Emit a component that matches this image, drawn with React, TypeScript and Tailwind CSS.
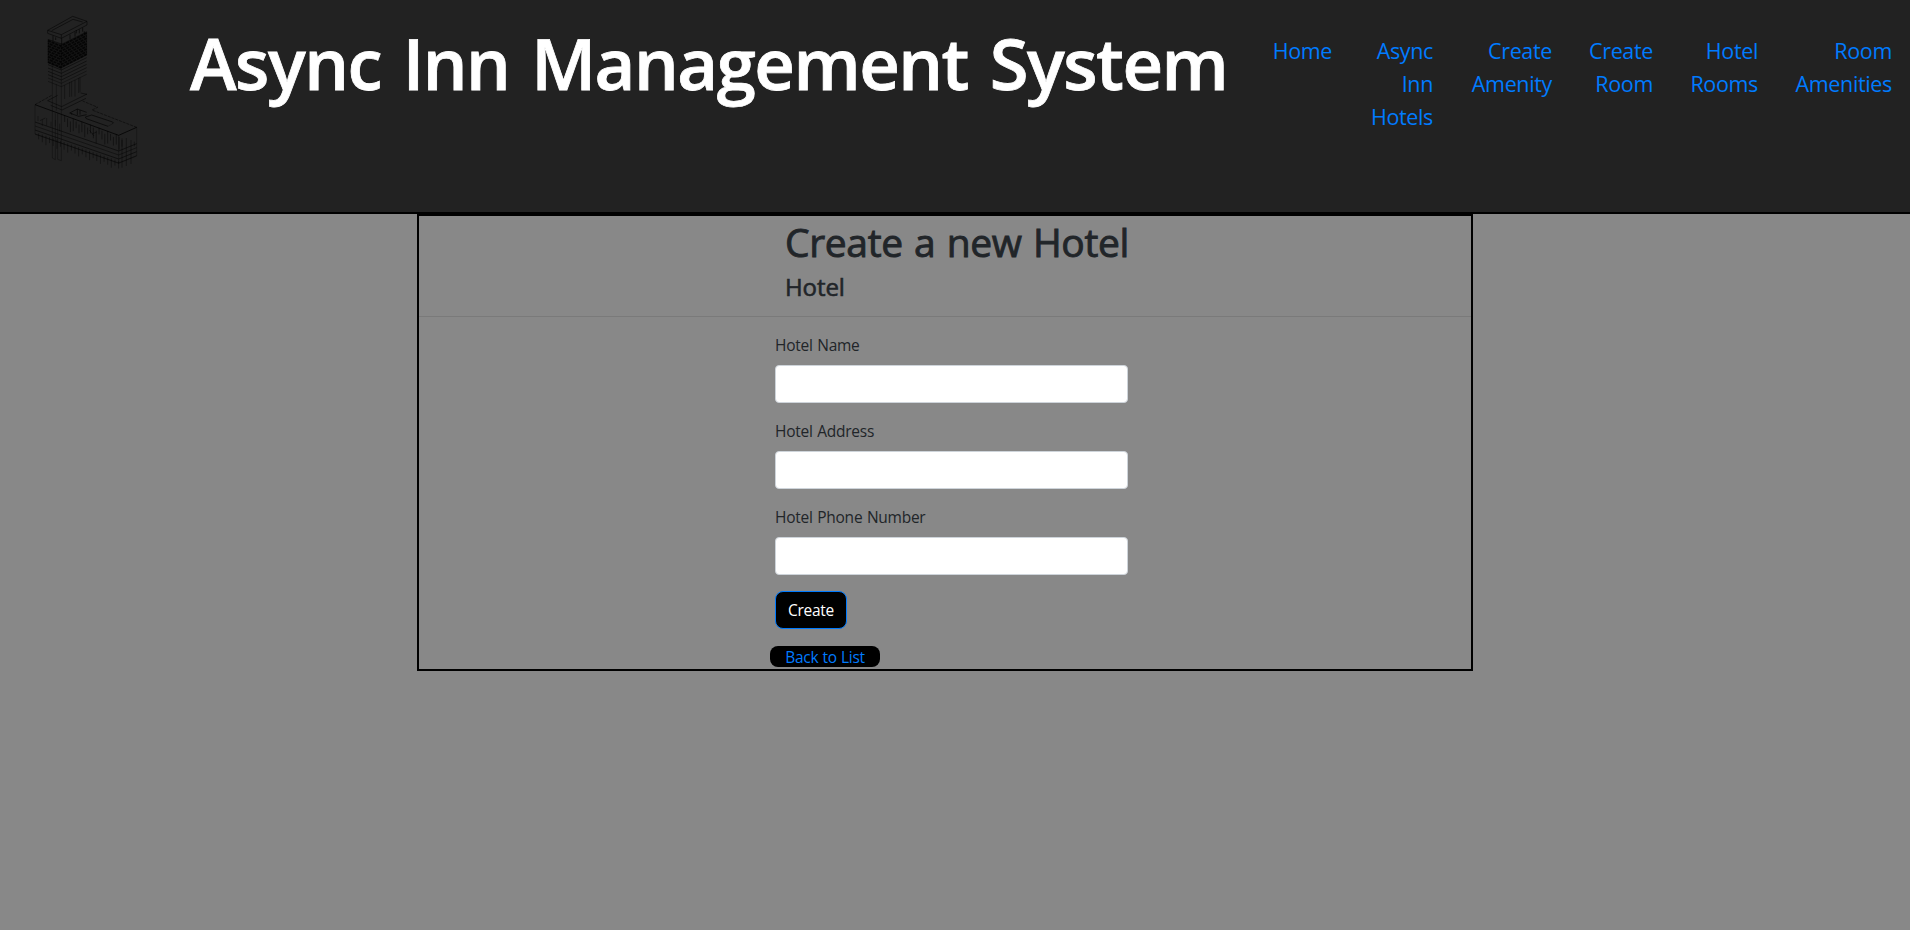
import React from "react";

const links = [
  { lines: ["Home"], width: "w-[62px]" },
  { lines: ["Async", "Inn", "Hotels"], width: "w-[101px]" },
  { lines: ["Create", "Amenity"], width: "w-[119px]" },
  { lines: ["Create", "Room"], width: "w-[101px]" },
  { lines: ["Hotel", "Rooms"], width: "w-[105px]" },
  { lines: ["Room", "Amenities"], width: "w-[134px]" },
];

const fields = ["Hotel Name", "Hotel Address", "Hotel Phone Number"];

function range(n: number) {
  return Array.from({ length: n }, (_, i) => i);
}

function BuildingLogo() {
  return (
    <svg viewBox="0 0 390 540" className="ml-5 h-[180px] w-[130px] shrink-0" fill="none" stroke="#000">
      {/* roof slab */}
      <path d="M83 91 158 49 201 64 124 104ZM83 91v9l41 15 77-40V64M124 104v11M95 92l64-34 29 8" strokeWidth="2.4" strokeOpacity=".65" />
      <path d="M99 107v17M107 112v8M125 115v18M150 104v14M165 96v14M169 90v10M178 88v12M188 83v12M193 94v10" strokeWidth="3" strokeOpacity=".6" />
      {/* tower floors */}
      <path d="M84 118 126 132 200 95V165L122 205 84 188Z" fill="#000" fillOpacity=".4" strokeOpacity=".5" strokeWidth="2" />
      {range(9).map((i) => (
        <path key={i} d={`M84 ${122 + i * 8} 122 ${138 + i * 8} 200 ${99 + i * 8}`} strokeWidth="5" strokeOpacity=".75" strokeDasharray="9 3" strokeDashoffset={(i % 2) * 6} />
      ))}
      {range(6).map((i) => (
        <path key={i} d={`M84 ${194 + i * 10} 124 ${210 + i * 10} 200 ${173 + i * 10}`} strokeWidth="2.4" strokeOpacity={i > 3 ? 0.45 : 0.6} />
      ))}
      {/* core columns */}
      <path d="M97 165V474l9 5V340M109 252v80M113 340V478l11 4V132" strokeWidth="2.2" strokeOpacity=".42" />
      <path d="M134 255v42M149 246v45M155 244v46M165 240v50M176 234v45M180 232v45" strokeWidth="2.2" strokeOpacity=".5" />
      <path d="M83 302l42 18 76-38M83 302l30-16M92 316l34 14 72-35M182 279l19 4" strokeWidth="2.4" strokeOpacity=".6" />
      {/* low wing */}
      <path d="M45 314 95 286M350 382 216 330 233 322 188 303" strokeWidth="2.4" strokeOpacity=".6" strokeDasharray="9 3" />
      <path d="M45 314 296 406 350 382" strokeWidth="3" strokeOpacity=".75" />
      <path d="M45 314V402L296 490 350 468V382M296 406V490" strokeWidth="1.8" strokeOpacity=".45" />
      <path d="M149 339 172 327 200 337M149 339 176 349 200 344M155 339v5M172 327v18M180 330v14" strokeWidth="2.6" strokeOpacity=".7" />
      <path d="M264 379 199 356 196 351 215 345 278 366Q282 369 278 371" strokeWidth="2.6" strokeOpacity=".7" />
      <path d="M278 371 264 379" strokeWidth="1.8" strokeOpacity=".45" />
      {range(4).map((i) => (
        <path key={i} d={`M45 ${366 + i * 12} 296 ${453 + i * 12} 350 ${431 + i * 12}`} strokeWidth="2.4" strokeOpacity={i % 2 ? 0.5 : 0.65} />
      ))}
      {range(21).map((i) => (
        <path key={i} d={`M${134 + i * 8.6} ${346 + i * 3.1 + (i % 3) * 6}v${20 + (i % 4) * 6}`} strokeWidth="2.4" strokeOpacity=".55" />
      ))}
      {range(6).map((i) => (
        <path key={i} d={`M${54 + i * 13} ${348 + i * 3 + (i % 2) * 8}v${15 + (i % 3) * 4}`} strokeWidth="2.2" strokeOpacity=".45" />
      ))}
      {range(23).map((i) => (
        <path key={i} d={`M${56 + i * 10.9} ${400 + i * 3.75}v${18 + (i % 3) * 5}`} strokeWidth="2.3" strokeOpacity=".5" />
      ))}
      <path d="M306 415v88M319 414v84M333 420v72M343 425v14M60 362l16-8M208 390l14 18M216 402l14-6" strokeWidth="2.3" strokeOpacity=".5" />
    </svg>
  );
}

export default function App() {
  return (
    <div className="min-h-screen bg-[#888888] font-['Open_Sans','Noto_Sans',sans-serif] text-[#212529]">
      <header className="flex h-[214px] items-start border-b-2 border-black bg-[#222222]">
        <BuildingLogo />
        <h1 className="mt-[21px] ml-10 shrink-0 text-[70.5px] leading-[84px] font-semibold tracking-[-1.5px] whitespace-nowrap text-white [-webkit-text-stroke:0.8px_white] [word-spacing:5px]">
          Async Inn Management System
        </h1>
        <nav className="mt-[34px] mr-[18px] ml-auto flex text-right text-[21.5px] leading-[33px] tracking-[-0.35px] text-[#007bff]">
          {links.map((link) => (
            <a key={link.lines.join(" ")} href="#" className={`${link.width} shrink-0`}>
              {link.lines.map((line) => (
                <span key={line} className="block">{line}</span>
              ))}
            </a>
          ))}
        </nav>
      </header>
      <main className="ml-[417px] h-[457px] w-[1056px] border-2 border-black">
        <h2 className="mt-0.5 ml-[366px] text-[39px] leading-[48px] tracking-[-0.35px] [-webkit-text-stroke:0.9px_#212529] [word-spacing:1.5px]">Create a new Hotel</h2>
        <h4 className="mt-1.5 ml-[366px] text-2xl leading-[29px] tracking-[-0.1px] [-webkit-text-stroke:0.6px_#212529]">Hotel</h4>
        <hr className="mt-[15px] border-t border-black/10" />
        <form className="mt-4 ml-[356px] w-[353px] text-[15.5px] leading-6 tracking-[-0.25px]">
          {fields.map((label) => (
            <label key={label} className="mb-4 block">
              <span className="mb-2 block [word-spacing:0.8px]">{label}</span>
              <input type="text" className="block h-[38px] w-full rounded border border-[#ced4da] bg-white px-3" />
            </label>
          ))}
          <button type="button" className="block h-[38px] w-[72px] rounded-lg border border-[#007bff] bg-black text-center text-white">
            Create
          </button>
        </form>
        <a href="#" className="mt-[17px] ml-[351px] block h-[21px] w-[110px] rounded-lg bg-black text-center text-[15.5px] leading-[22px] tracking-[-0.3px] text-[#007bff] [word-spacing:0.5px]">
          Back to List
        </a>
      </main>
    </div>
  );
}
